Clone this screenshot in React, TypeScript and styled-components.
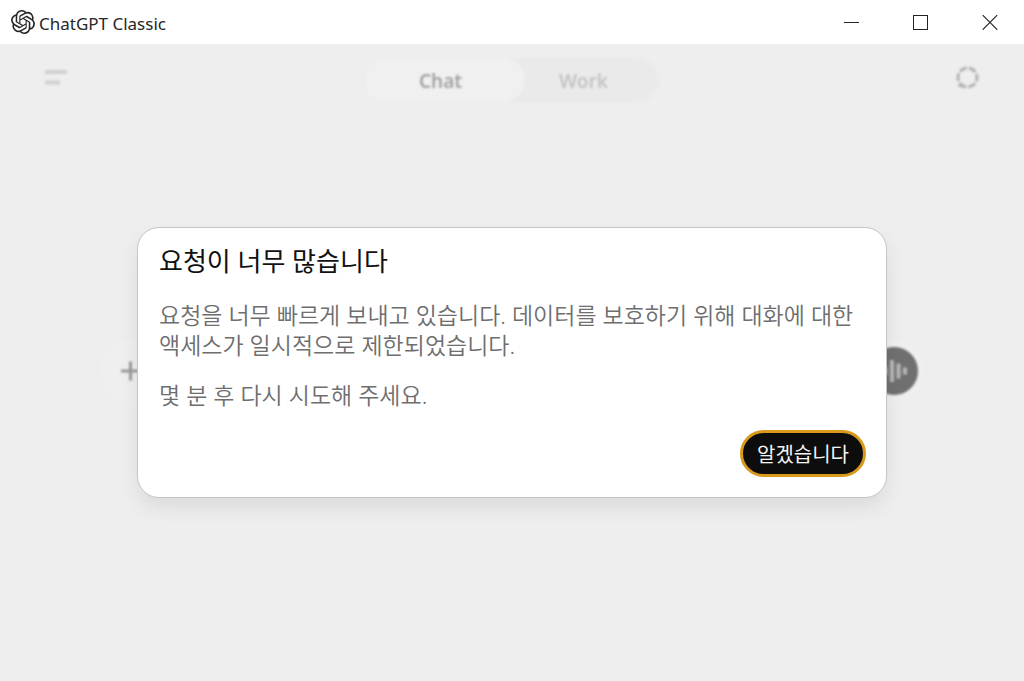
import React from "react";
import styled, { createGlobalStyle, css } from "styled-components";
import { SiOpenai } from "react-icons/si";

const GlobalStyle = createGlobalStyle`
  *, *::before, *::after { box-sizing: border-box; }
  body {
    margin: 0;
    background: #eeeeee;
    font-family: "Noto Sans", "Noto Sans CJK KR", sans-serif;
  }
  button { font: inherit; border: 0; padding: 0; background: none; color: inherit; }
  h1, h2, p { margin: 0; }
`;

const Window = styled.div`
  display: flex;
  flex-direction: column;
  min-height: 100vh;
`;

const TitleBar = styled.header`
  display: flex;
  align-items: center;
  justify-content: space-between;
  height: 44px;
  padding-left: 11px;
  background: #ffffff;
`;

const Brand = styled.div`
  display: flex;
  align-items: center;
  gap: 4px;
  color: #262626;
`;

const BrandName = styled.h1`
  padding-top: 3px;
  font-size: 17px;
  font-weight: 400;
  line-height: 24px;
`;

const WindowControls = styled.div`
  display: flex;
`;

const WindowButton = styled.button`
  display: grid;
  place-items: center;
  width: 69px;
  height: 42px;
  color: #222222;
`;

const Workspace = styled.main`
  position: relative;
  flex: 1;
  display: flex;
  flex-direction: column;
`;

const Background = styled.div`
  flex: 1;
  display: grid;
  grid-template-rows: 68px 1fr 68px;
  filter: blur(1px);
`;

const TopBar = styled.div`
  display: grid;
  grid-template-columns: 1fr auto 1fr;
  align-items: center;
  padding: 0 44px;
`;

const ToolButton = styled.button<{ $end?: boolean }>`
  display: grid;
  justify-self: ${(p) => (p.$end ? "end" : "start")};
  color: ${(p) => (p.$end ? "#b4b4b4" : "#d0d0d0")};
`;

const Segmented = styled.div`
  display: flex;
  height: 44px;
  margin-top: 4px;
  border-radius: 22px;
  background: #eaeaea;
`;

const Segment = styled.button<{ $active?: boolean }>`
  width: ${(p) => (p.$active ? 160 : 134)}px;
  padding-top: 2px;
  border-radius: 22px;
  font-size: 19px;
  font-weight: 600;
  color: #c4c4c4;
  text-align: left;
  padding-left: 34px;
  ${(p) =>
    p.$active &&
    css`
      padding-left: 54px;
      background: #f0f0f0;
      color: #a2a2a2;
    `}
`;

const Composer = styled.form`
  align-self: center;
  justify-self: center;
  display: flex;
  align-items: center;
  justify-content: space-between;
  width: calc(100% - 200px);
  height: 64px;
  margin-top: 16px;
  padding: 0 6px 0 20px;
  border-radius: 32px;
  background: #efefef;
`;

const AddButton = styled.button`
  display: grid;
  color: #999999;
`;

const VoiceButton = styled.button`
  display: grid;
  place-items: center;
  width: 48px;
  height: 48px;
  border-radius: 50%;
  background: #707070;
  color: #b8b8b8;
`;

const Overlay = styled.div`
  position: absolute;
  inset: 0;
  display: grid;
  place-items: center;
`;

const Dialog = styled.section`
  width: calc(100% - 274px);
  padding: 18px 20px 20px 21px;
  border: 1px solid #c6c6c6;
  border-radius: 22px;
  background: #ffffff;
  box-shadow: 0 10px 20px rgba(0, 0, 0, 0.08);
`;

const DialogTitle = styled.h2`
  font-size: 26px;
  font-weight: 400;
  line-height: 30px;
  color: #111111;
`;

const DialogBody = styled.div`
  display: grid;
  gap: 20px;
  margin-top: 24px;
`;

const Message = styled.p`
  font-size: 23px;
  font-weight: 350;
  line-height: 30px;
  color: #6e6e6e;
`;

const Actions = styled.footer`
  display: flex;
  justify-content: flex-end;
  margin-top: 20px;
`;

const ConfirmButton = styled.button`
  height: 47px;
  padding: 3px 14px 0;
  border: 3px solid #d99a1c;
  border-radius: 24px;
  background: #0d0d0d;
  font-size: 20px;
  line-height: 38px;
  color: #f4f4f4;
`;

export default function App() {
  return (
    <>
      <GlobalStyle />
      <Window>
        <TitleBar>
          <Brand>
            <SiOpenai size={24} aria-hidden="true" />
            <BrandName>ChatGPT Classic</BrandName>
          </Brand>
          <WindowControls>
            <WindowButton type="button" aria-label="Minimize">
              <svg width="16" height="16" viewBox="0 0 16 16" stroke="currentColor">
                <path d="M0 8.5h15" />
              </svg>
            </WindowButton>
            <WindowButton type="button" aria-label="Maximize">
              <svg width="16" height="16" viewBox="0 0 16 16" fill="none" stroke="currentColor">
                <rect x="0.5" y="1.5" width="14" height="14" />
              </svg>
            </WindowButton>
            <WindowButton type="button" aria-label="Close">
              <svg width="16" height="16" viewBox="0 0 16 16" stroke="currentColor" strokeWidth="1.1">
                <path d="M0.7 1.2l14.5 14.5M15.2 1.2L0.7 15.7" />
              </svg>
            </WindowButton>
          </WindowControls>
        </TitleBar>
        <Workspace>
          <Background>
            <TopBar>
              <ToolButton type="button" aria-label="Menu">
                <svg width="24" height="16" viewBox="0 0 24 16" stroke="currentColor" strokeWidth="4">
                  <path d="M1 2h22M1 12.5h15" />
                </svg>
              </ToolButton>
              <Segmented>
                <Segment type="button" $active>Chat</Segment>
                <Segment type="button">Work</Segment>
              </Segmented>
              <ToolButton type="button" aria-label="Temporary chat" $end>
                <svg width="26" height="26" viewBox="0 0 26 26" fill="none" stroke="currentColor" strokeWidth="3">
                  <circle cx="13.5" cy="12.5" r="9.5" strokeDasharray="7.9 2.05" strokeDashoffset="3.9" />
                  <path d="M4.5 20.5l4 0.5" />
                </svg>
              </ToolButton>
            </TopBar>
            <Composer>
              <AddButton type="button" aria-label="Add">
                <svg width="20" height="20" viewBox="0 0 20 20" stroke="currentColor" strokeWidth="3">
                  <path d="M10.5 0.5v19M1 10h19" />
                </svg>
              </AddButton>
              <VoiceButton type="button" aria-label="Voice">
                <svg width="28" height="24" viewBox="0 0 28 24" stroke="currentColor" strokeWidth="4">
                  <path d="M5.5 8v8M12 1v22M18.5 4.5v15M25 8.5v7" />
                </svg>
              </VoiceButton>
            </Composer>
          </Background>
          <Overlay>
            <Dialog role="dialog" aria-modal="true" aria-labelledby="limit-title">
              <DialogTitle id="limit-title">요청이 너무 많습니다</DialogTitle>
              <DialogBody>
                <Message>
                  요청을 너무 빠르게 보내고 있습니다. 데이터를 보호하기 위해 대화에 대한 액세스가 일시적으로 제한되었습니다.
                </Message>
                <Message>몇 분 후 다시 시도해 주세요.</Message>
              </DialogBody>
              <Actions>
                <ConfirmButton type="button">알겠습니다</ConfirmButton>
              </Actions>
            </Dialog>
          </Overlay>
        </Workspace>
      </Window>
    </>
  );
}
